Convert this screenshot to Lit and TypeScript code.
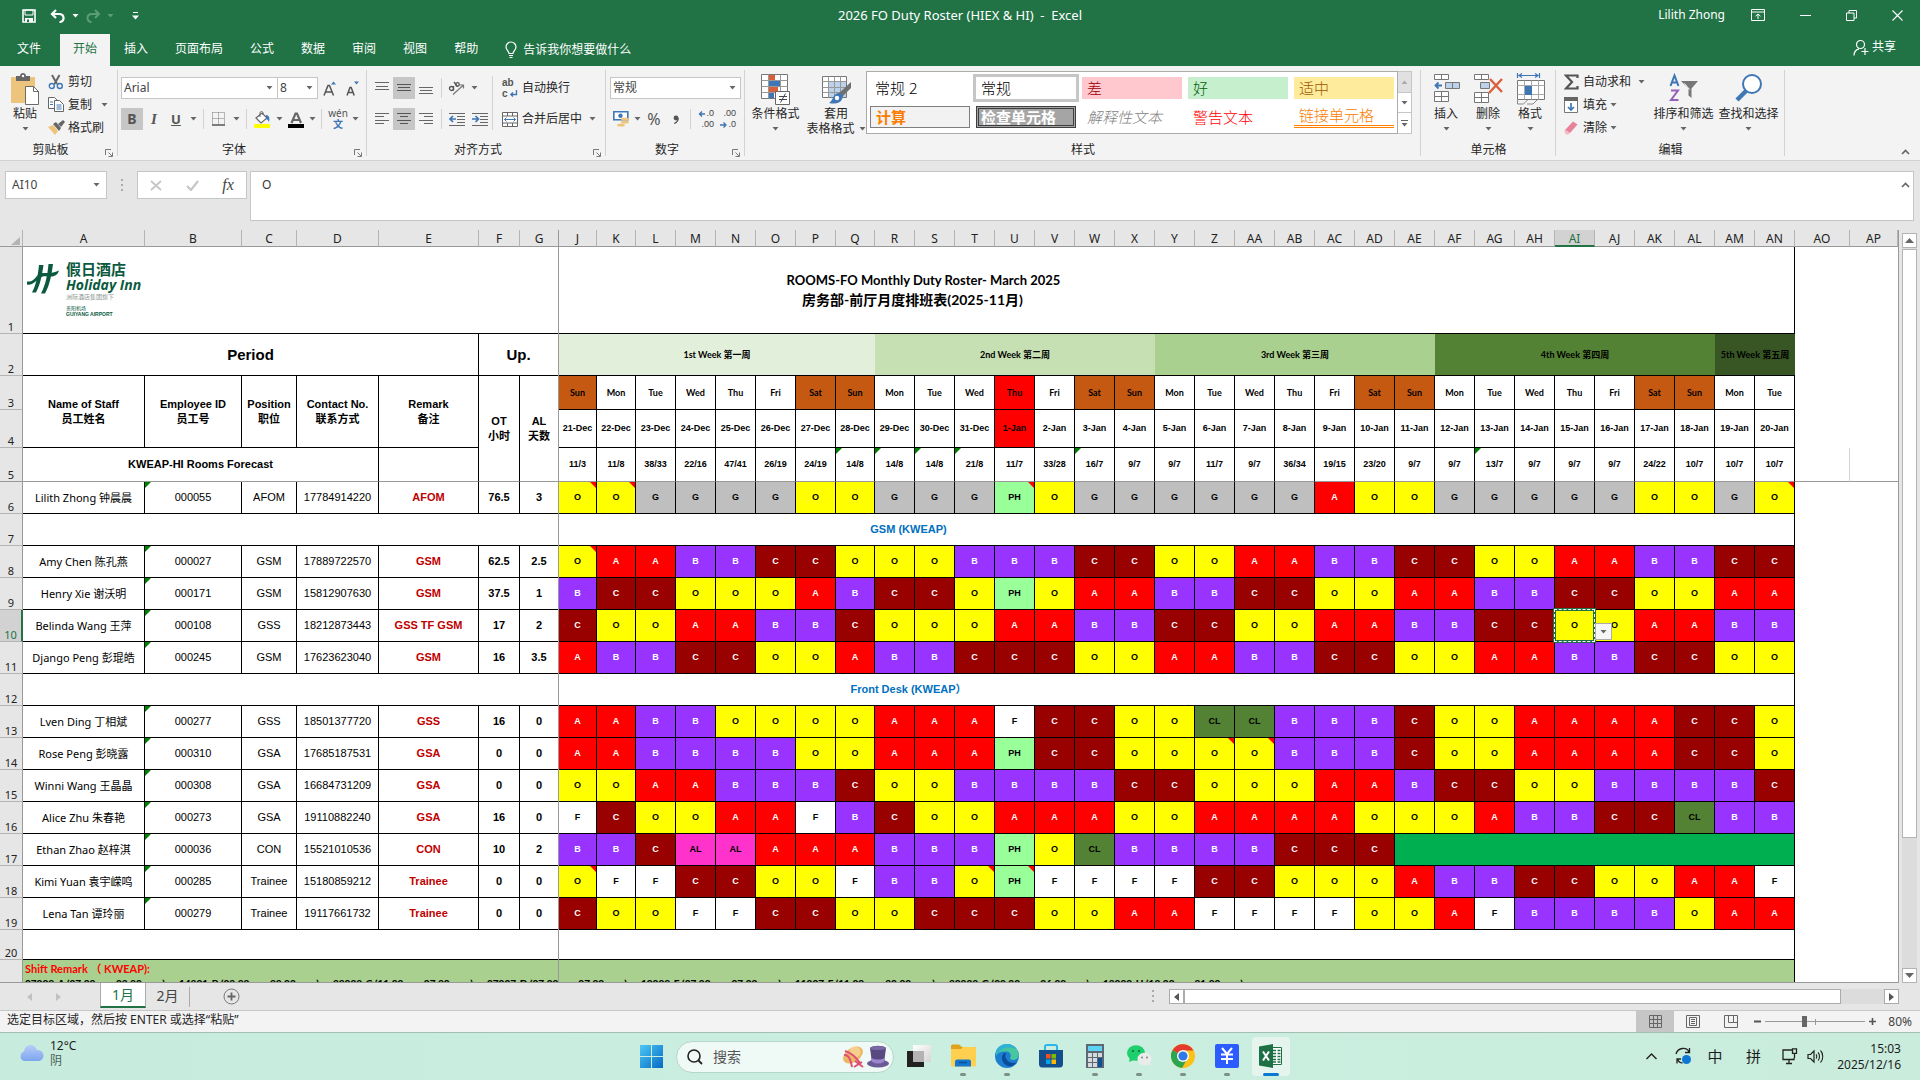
import { LitElement, html, css, svg, nothing } from "lit";
import { customElement } from "lit/decorators.js";
import { classMap } from "lit/directives/class-map.js";

const base = css`
  * { box-sizing: border-box; }
  :host {
    display: block;
    font-family: "Noto Sans", "Noto Sans CJK SC", sans-serif;
    font-size: 12px;
    line-height: 16px;
    color: #262626;
  }
  button, input, select, textarea {
    font: inherit; color: inherit; background: none; border: 0; margin: 0; padding: 0; border-radius: 0;
  }
  button { display: flex; align-items: center; justify-content: center; white-space: nowrap; }
  svg { display: block; flex: none; }
`;

const icon = (w: number, h: number, body: unknown) =>
  html`<svg width=${w} height=${h} viewBox="0 0 ${w} ${h}" fill="none" aria-hidden="true">${body}</svg>`;
const caret = (color = "#666") => icon(7, 4, svg`<path d="M0.5 0h6L3.5 3.6z" fill=${color}/>`);

const icons = {
  save: icon(14, 14, svg`<path d="M1 1h12v12H1z" stroke="#fff" stroke-width="1.6"/><path d="M3 1h8v5H3z" stroke="#fff"/><path d="M3 9h8v4H3z" fill="#fff"/><path d="M5 10.500h2V13H5z" fill="#217346"/>`),
  undo: icon(16, 14, svg`<path d="M6 1L2 5l4 4M2.500 5H9c6 0 6 8 .5 8" stroke="#fff" stroke-width="2.200"/>`),
  redo: icon(16, 14, svg`<path d="M10 1l4 4-4 4M13.500 5H7c-6 0-6 8-.5 8" stroke="#5c9c78" stroke-width="2"/>`),
  customize: icon(7, 8, svg`<path d="M1 .5h5" stroke="#fff"/><path d="M0 3.500h7L3.500 7.500z" fill="#fff"/>`),
  bulb: icon(14, 18, svg`<path d="M5 12.500C5 10 2 9 2 6a5 5 0 0 1 10 0c0 3-3 4-3 6.500zM5 14.500h4M5.500 16.500h3" stroke="#fff" stroke-width="1.200"/>`),
  ribbonOpt: icon(14, 12, svg`<path d="M.5 .5h13v11H.5zM.5 3h13M7 10V5M4.500 7.200L7 5l2.500 2.200" stroke="#fff"/>`),
  min: icon(11, 11, svg`<path d="M0 5.500h11" stroke="#fff"/>`),
  restore: icon(11, 11, svg`<path d="M.5 3h7.500v7.500H.5zM3 3V.5h7.500V8H8" stroke="#fff"/>`),
  close: icon(11, 11, svg`<path d="M.5 .5l10 10M10.500 .5l-10 10" stroke="#fff" stroke-width="1.100"/>`),
  person: icon(16, 17, svg`<circle cx="7.500" cy="5.500" r="4" stroke="#fff" stroke-width="1.200"/><path d="M1 16.500c0-4 2.500-6 5-6.700M12 9v7M8.500 12.500h7" stroke="#fff" stroke-width="1.200"/>`),
  paste: icon(30, 32, svg`<path d="M1 4h24v26H1z" fill="#edc47c"/><path d="M6 3h4c0-4 6-4 6 0h4v5H6z" fill="#666"/><circle cx="13" cy="3" r="1.200" fill="#fff"/><path d="M15.500 13.500h8l5 5v13h-13z" fill="#fff" stroke="#6b6b6b"/><path d="M23.500 13.500v5h5" stroke="#6b6b6b"/>`),
  cut: icon(16, 16, svg`<path d="M4 1l5 9M11.500 1l-5 9" stroke="#666" stroke-width="2"/><circle cx="3.800" cy="12" r="2.500" stroke="#3f76b5" stroke-width="1.400"/><circle cx="11.800" cy="12" r="2.500" stroke="#3f76b5" stroke-width="1.400"/>`),
  copy: icon(16, 15, svg`<path d="M.5 .5h6l3 3v8h-9z" fill="#fff" stroke="#666"/><path d="M2 5h3M2 7.500h3" stroke="#3f76b5"/><path d="M6.500 3.500h5l4 4v7h-9z" fill="#fff" stroke="#666"/><path d="M8.500 8h5M8.500 10h5M8.500 12h5" stroke="#3f76b5"/>`),
  painter: icon(17, 15, svg`<path d="M0 7l5-2 5 6-3 4z" fill="#edc47c"/><path d="M5 4l3-2 5 6-2 3z" fill="#666"/><path d="M10 4l5-4 2 2-4 5z" fill="#666"/>`),
  growA: icon(14, 17, svg`<path d="M1 15.500L5 5.500h1.500l4 10M2.800 12h6" stroke="#555" stroke-width="1.500"/><path d="M8 4.500L10.500 1.500 13 4.500z" fill="#3f76b5"/>`),
  shrinkA: icon(14, 17, svg`<path d="M1 15.500l3-8h1.200l3 8M2.500 12.500h4.500" stroke="#555" stroke-width="1.500"/><path d="M8 1.500h5L10.500 4.500z" fill="#3f76b5"/>`),
  borders: icon(14, 14, svg`<path d="M.5 .5v12M6.500 .5v12M12.500 .5v12M.5 .5h12M.5 6.500h12" stroke="#777" stroke-dasharray="1 1"/><path d="M0 13h13" stroke="#555" stroke-width="1.500"/>`),
  fill: icon(17, 17, svg`<path d="M2 7l6-5 5 5-6 5z" stroke="#666" fill="#fff" stroke-width="1.200"/><path d="M6 6V2c0-2 3-2 3 0v2" stroke="#666"/><path d="M12 4c3 0 4 3 3 7-1-2-2-3-3-3z" fill="#3f76b5"/><path d="M0 13h16v4H0z" fill="#ff0"/>`),
  fontColor: icon(17, 17, svg`<path d="M3.500 12L7.500 2.500h1.500L13 12M5 9h7" stroke="#666" stroke-width="2.200"/><path d="M0 13h16v4H0z" fill="#000"/>`),
  top: icon(14, 14, svg`<path d="M0 1.500h14M1 5.500h12M0 8.500h14" stroke="#666"/>`),
  middle: icon(14, 14, svg`<path d="M0 3.500h14M1 6.500h12M0 9.500h14" stroke="#555"/>`),
  bottom: icon(14, 14, svg`<path d="M0 6.500h14M1 9.500h12M0 12.500h14" stroke="#666"/>`),
  left: icon(14, 14, svg`<path d="M0 1.500h14M0 4.500h9M0 8.500h14M0 11.500h9" stroke="#666"/>`),
  center: icon(14, 14, svg`<path d="M0 1.500h14M3 4.500h8M0 8.500h14M3 11.500h8" stroke="#555"/>`),
  right: icon(14, 14, svg`<path d="M0 1.500h14M5 4.500h9M0 8.500h14M5 11.500h9" stroke="#666"/>`),
  orient: icon(18, 16, svg`<circle cx="3.500" cy="8.500" r="2" stroke="#555" stroke-width="1.300"/><path d="M5.500 6v4.500M6 2l3.500 4.500" stroke="#555" stroke-width="1.300"/><circle cx="9.500" cy="4.500" r="1.800" stroke="#555" stroke-width="1.300"/><path d="M5 14.500L15.500 5M12 5h3.500v3.500" stroke="#777" stroke-width="1.200"/>`),
  outdent: icon(16, 14, svg`<path d="M0 1.500h16M8 4.500h8M8 7.500h8M8 10.500h8M0 13.500h16" stroke="#666"/><path d="M7 7H1M4 4L1 7l3 3" stroke="#3f76b5" stroke-width="1.700"/>`),
  indent: icon(16, 14, svg`<path d="M0 1.500h16M8 4.500h8M8 7.500h8M8 10.500h8M0 13.500h16" stroke="#666"/><path d="M0 7h6M3.500 4l3 3-3 3" stroke="#3f76b5" stroke-width="1.700"/>`),
  wrap: icon(9, 8, svg`<path d="M7.500 0v4.500H2M4 2.500l-2.200 2 2.200 2" stroke="#3f76b5" stroke-width="1.300"/>`),
  merge: icon(16, 15, svg`<path d="M.5 .5h15v14H.5zM.5 4h15M.5 11h15M5.500 .5V4M10.500 .5V4M5.500 11v3.500M10.500 11v3.500" stroke="#666" fill="#fff"/><path d="M2.500 7.500h11M4.500 5.500l-2 2 2 2M11.500 5.500l2 2-2 2" stroke="#3f76b5"/>`),
  currency: icon(17, 16, svg`<path d="M.8 .8h14v8H.8z" fill="#fff" stroke="#3f76b5" stroke-width="1.600"/><circle cx="7.500" cy="4.800" r="2.200" fill="#3f76b5"/><ellipse cx="12" cy="8" rx="4" ry="1.600" fill="#edc47c"/><ellipse cx="12" cy="11" rx="4" ry="1.600" fill="#edc47c"/><ellipse cx="8" cy="14" rx="4" ry="1.600" fill="#edc47c"/>`),
  comma: icon(6, 9, svg`<circle cx="3" cy="3" r="2.400" fill="#555"/><path d="M5.200 3c0 3-1.500 4.500-4 5.500" stroke="#555" stroke-width="1.300"/>`),
  decUp: icon(8, 6, svg`<path d="M7 3H1.500M4 .5L1.500 3 4 5.500" stroke="#3f76b5" stroke-width="1.400"/>`),
  decDn: icon(8, 6, svg`<path d="M0 3h6M3.500 .5L6 3 3.500 5.500" stroke="#3f76b5" stroke-width="1.400"/>`),
  cond: icon(31, 32, svg`<path d="M1.500 1.500h26v24h-26z" fill="#fff" stroke="#777"/><path d="M9 2h6v6H9z" fill="#d9603b"/><path d="M9 8h11v5H9z" fill="#3f76b5"/><path d="M9 14h9v5H9z" fill="#d9603b"/><path d="M9 20h5v5H9z" fill="#3f76b5"/><path d="M1.500 7.500h26M1.500 13.500h26M1.500 19.500h26M8.500 1.500v24M20.500 1.500v24" stroke="#999"/><path d="M15.500 18.500h14v13h-14z" fill="#fff" stroke="#666"/><path d="M19 23.500h8M19 26.500h8M25.500 20.500l-5 9" stroke="#444"/>`),
  tableFmt: icon(31, 32, svg`<path d="M1.500 3.500h24v21h-24z" fill="#fff" stroke="#777"/><path d="M8 9h17v15H8z" fill="#bcd2ea"/><path d="M1.500 8.500h24M1.500 14.500h24M1.500 19.500h24M7.500 3.500v21M13.500 3.500v21M19.500 3.500v21" stroke="#999"/><path d="M30 9v6l-9 9-4-3z" fill="#707070"/><path d="M17 20c4 0 6 3 4 6-2 5-8 5-13 4 4-2 4-9 9-10z" fill="#3f76b5"/><circle cx="16" cy="25" r="2.200" fill="#fff"/>`),
  insert: icon(27, 30, svg`<path d="M1.500 1.500h14v5h-14zM8.500 1.500v5M1.500 18.500h14v10h-14zM8.500 18.500v10M1.500 23.500h14" stroke="#777" fill="#fff"/><path d="M12.500 9.500h14v6h-14z" fill="#bcd2ea" stroke="#777"/><path d="M19.500 9.500v6" stroke="#777"/><path d="M9 12.500H2.500M5.500 9.500l-3 3 3 3" stroke="#3f76b5" stroke-width="1.800"/>`),
  remove: icon(30, 30, svg`<path d="M1.500 1.500h14v5h-14zM8.500 1.500v5M1.500 19.500h14v10h-14zM8.500 19.500v10M1.500 24.500h14" stroke="#777" fill="#fff"/><path d="M7.500 9.500h9v6h-9z" fill="#bcd2ea" stroke="#777"/><path d="M17 6l12 13M29 6L16 20" stroke="#d9603b" stroke-width="2.400"/>`),
  format: icon(29, 32, svg`<path d="M1.500 0v5M23.500 0v5M3 2.500h19M6 .5l-3 2 3 2M19 .5l3 2-3 2" stroke="#3f76b5" stroke-width="1.200"/><path d="M1.500 7.500h27v19h-27z" fill="#fff" stroke="#777"/><path d="M1.500 12.500h27M1.500 21.500h27M8.500 7.500v19M15.500 7.500v19M22.500 7.500v19" stroke="#aaa"/><path d="M9 13h7v9H9z" fill="#3f76b5"/><path d="M1.500 27v4h6l4-4M11 31h6l4-4" stroke="#888"/>`),
  sigma: icon(15, 16, svg`<path d="M13.500 4V1.500H2L8 8l-6 6.500h11.500V12" stroke="#555" stroke-width="2.200"/>`),
  fillDown: icon(14, 16, svg`<path d="M.5 .5h13v15H.5z" fill="#fff" stroke="#777"/><path d="M0 0h14v4H0z" fill="#666"/><path d="M7 6v7M4 10l3 3 3-3" stroke="#3f76b5" stroke-width="1.700"/>`),
  eraser: icon(14, 14, svg`<path d="M1 9l8-8.500 4.500 3L6 12z" fill="#e8829b"/><path d="M0 10l1-1 5 3-1.500 1.500H2z" fill="#f3b9c6"/>`),
  sort: icon(30, 30, svg`<path d="M1.500 13L5.500 2.500l4 10.500M3 9.500h5.500" stroke="#3f76b5" stroke-width="2"/><path d="M2 17.500h7L2 27h7.500" stroke="#9561b8" stroke-width="2"/><path d="M12 8h17l-6.500 7.500V25l-3-2.500v-7z" fill="#777"/><path d="M20.500 16.500l-5-6" stroke="#fff"/>`),
  find: icon(29, 30, svg`<circle cx="18" cy="11" r="9" stroke="#3f76b5" stroke-width="2" fill="#fff"/><path d="M12 18L3 27" stroke="#3f76b5" stroke-width="4.500"/>`),
  launcher: icon(8, 8, svg`<path d="M.5 6V.5H6M3.500 3.500l3.500 3.500M7.500 3.500v4h-4" stroke="#777"/>`),
  collapse: icon(9, 6, svg`<path d="M1 5l3.500-3.500L8 5" stroke="#666" stroke-width="1.700"/>`),
};

@customElement("excel-ribbon")
class ExcelRibbon extends LitElement {
  static styles = [base, css`
    .green { background: #217346; color: #fff; }
    .title { display: grid; grid-template-columns: 1fr auto 1fr; align-items: center; height: 30px; }
    .quick { display: flex; align-items: center; padding-left: 22px; gap: 6px; padding-top: 2px; }
    .quick .gap { margin-left: 2px; }
    .quick .last { margin-left: 6px; }
    .name { white-space: pre; font-size: 13px; }
    .win { display: flex; align-items: center; justify-content: flex-end; padding-right: 17px; gap: 35px; }
    .win .user { margin-right: -9px; }
    .tabs { display: flex; align-items: flex-end; height: 36px; padding-left: 4px; }
    .tabs button { height: 32px; padding: 0 13px 2px; margin-right: 1px; }
    .tabs button.file { margin-right: 6px; }
    .tabs button.on { background: #f3f3f3; color: #217346; }
    .tabs button.tell { gap: 5px; padding: 0 12px; }
    .tabs button.share { margin-left: auto; padding: 0 23px 6px 0; gap: 3px; }
    .ribbon { display: flex; height: 95px; background: #f3f3f3; border-bottom: 1px solid #d2d2d2; }
    .group { display: flex; flex-direction: column; position: relative; flex: none; }
    .group::after { content: ""; position: absolute; right: 0; top: 4px; bottom: 4px; width: 1px; background: #d2d2d2; }
    .clip { width: 118px; } .font { width: 249px; } .align { width: 239px; } .num { width: 139px; }
    .styles { width: 676px; } .cells { width: 135px; } .edit { width: 229px; }
    .body { display: flex; height: 76px; }
    .cells .body { padding-left: 4px; }
    .foot { display: flex; height: 16px; align-items: center; }
    .foot span { flex: 1; text-align: center; }
    .foot button { width: 17px; height: 16px; padding: 5px 1px 0 0; }
    .stack { display: flex; flex-direction: column; padding-top: 4px; }
    .edit .stack { padding-left: 7px; }
    .stack > div { display: flex; align-items: center; height: 23px; }
    .stack button { gap: 4px; }
    .stack .ico { width: 16px; display: flex; justify-content: center; }
    .rows { display: flex; flex-direction: column; gap: 9px; padding: 11px 0 0 4px; }
    .font .rows { padding-left: 3px; }
    .rows > div { display: flex; align-items: center; height: 22px; }
    .w10 { width: 10px; height: 22px; } .w12 { width: 12px; height: 22px; } .w20 { width: 20px; height: 22px; }
    .w22 { width: 22px; height: 22px; } .w24 { width: 24px; height: 22px; }
    .on2 { background: #c6c6c6; }
    .sep { width: 1px; height: 20px; margin: 0 4px; background: #d2d2d2; }
    .tall { width: 1px; height: 54px; margin: 10px 5px 0 0; background: #d2d2d2; }
    .combo { display: flex; align-items: center; height: 22px; background: #fff; border: 1px solid #c6c6c6; padding-right: 4px; }
    .combo select { appearance: none; flex: 1; min-width: 0; padding-left: 2px; height: 20px; color: #444; }
    .c-font { width: 157px; } .c-size { width: 41px; margin-left: -1px; } .c-num { width: 131px; }
    .bold { font-weight: 700; font-size: 14px; color: #555; }
    .ital { font: italic 700 15px "Liberation Serif", serif; color: #555; }
    .under { font-weight: 700; font-size: 13px; color: #555; text-decoration: underline; }
    .wen { flex-direction: column; font-size: 10px; line-height: 11px; color: #555; }
    .wen b { color: #3f76b5; font-weight: 700; }
    .wraps { flex-direction: column; align-items: flex-start; font: 700 10px/11px "Liberation Sans", sans-serif; color: #555; }
    .wraps span { display: flex; align-items: center; gap: 1px; height: 11px; }
    .act { gap: 4px; height: 22px; }
    .act .ico { width: 16px; display: flex; justify-content: center; }
    .pct { font-size: 16px; color: #555; }
    .dec { flex-direction: column; align-items: flex-end; font: 400 9px/11px "Liberation Sans", sans-serif; color: #444; padding-right: 3px; }
    .dec span { display: flex; align-items: center; height: 11px; }
    .big { flex-direction: column; justify-content: flex-start; padding-top: 7px; line-height: 15px; }
    .big svg { margin-bottom: 1px; }
    .big .pic { height: 33px; }
    .big .arr { height: 15px; display: flex; align-items: center; }
    .big .arr svg { margin: 0 0 0 4px; }
    .big .arr.only svg { margin: 0; }
    .b-paste { width: 48px; padding-left: 2px; } .b-cond { width: 61px; } .b-table { width: 60px; }
    .b-cell { width: 42px; } .b-edit { width: 65px; }
    .gallery { display: grid; grid-template-columns: repeat(5, 100px); gap: 6px; padding: 5px 3px 5px 3px; height: 63px; margin-top: 5px;
      background: #fff; border: 1px solid #ababab; }
    .gallery button { justify-content: flex-start; padding-left: 5px; height: 22px; font-size: 15px; font-weight: 300; color: #000; }
    .gallery .sel { outline: 3px solid #c6c6c6; }
    .gallery .bad { background: #ffc7ce; color: #9c0006; }
    .gallery .good { background: #c6efce; color: #006100; }
    .gallery .mid { background: #ffeb9c; color: #9c5700; }
    .gallery .calc { border: 1px solid #7f7f7f; background: #f2f2f2; color: #fa7d00; font-weight: 700; }
    .gallery .check { border: 3px double #3f3f3f; background: #a5a5a5; color: #fff; font-weight: 700; padding-left: 2px; }
    .gallery .note { color: #7f7f7f; font-style: italic; }
    .gallery .warn { color: #f00; }
    .gallery .link { color: #fa7d00; border-bottom: 3px double #ff8001; }
    .gscroll { display: flex; flex-direction: column; width: 14px; height: 63px; margin-top: 5px; }
    .gscroll button { flex: 1; border: 1px solid #c6c6c6; border-left: 0; margin-bottom: -1px; background: #fff; flex-direction: column; gap: 2px; }
    .gscroll button:first-child { background: #e1e1e1; }
    .gscroll button:last-child { margin-bottom: 0; }
    .fold { margin-left: auto; width: 30px; padding-top: 80px; height: 92px; }
    .fx { display: flex; align-items: flex-start; gap: 3px; height: 69px; padding: 10px 6px 0 5px; background: #e6e6e6; }
    .namebox { display: flex; align-items: center; width: 102px; height: 28px; background: #fff; border: 1px solid #c6c6c6; padding: 0 6px; }
    .namebox input { flex: 1; min-width: 0; color: #444; }
    .dots { width: 24px; height: 28px; display: flex; align-items: center; justify-content: center; }
    .fxb { display: flex; width: 110px; height: 28px; background: #fff; border: 1px solid #c6c6c6; }
    .fxb button { flex: 1; }
    .fxb .fn { font: italic 400 16px "Liberation Serif", serif; color: #444; }
    .formula { flex: 1; display: flex; align-items: flex-start; height: 50px; background: #fff; border: 1px solid #c6c6c6; }
    .formula textarea { flex: 1; resize: none; outline: 0; height: 46px; padding: 5px 11px; color: #333; overflow: hidden; }
    .formula button { width: 15px; height: 26px; }
  `];

  private foot(label: string, launcher = true) {
    return html`<div class="foot"><span>${label}</span>${launcher ? html`<button aria-label="${label}设置">${icons.launcher}</button>` : nothing}</div>`;
  }
  private tool(cls: string, label: string, body: unknown) {
    return html`<button class=${cls} aria-label=${label}>${body}</button>`;
  }
  private drop(label: string, cls = "w12") {
    return html`<button class=${cls} aria-label="${label}选项">${caret()}</button>`;
  }
  private big(cls: string, pic: unknown, label: string) {
    return html`<button class="big ${cls}"><span class="pic">${pic}</span><span>${label}</span><span class="arr only">${caret()}</span></button>`;
  }

  render() {
    return html`
      <header class="green">
        <div class="title">
          <div class="quick">
            ${this.tool("", "保存", icons.save)}
            <span class="gap"></span>${this.tool("", "撤消", icons.undo)}${this.tool("", "撤消列表", caret("#fff"))}
            ${this.tool("", "恢复", icons.redo)}${this.tool("", "恢复列表", caret("#5c9c78"))}
            <span class="last"></span>${this.tool("", "自定义快速访问工具栏", icons.customize)}
          </div>
          <div class="name">2026 FO Duty Roster (HIEX &amp; HI)  -  Excel</div>
          <div class="win">
            <span class="user">Lilith Zhong</span>
            ${this.tool("", "功能区显示选项", icons.ribbonOpt)}${this.tool("", "最小化", icons.min)}
            ${this.tool("", "还原", icons.restore)}${this.tool("", "关闭", icons.close)}
          </div>
        </div>
        <nav class="tabs">
          <button class="file">文件</button><button class="on">开始</button>
          ${["插入", "页面布局", "公式", "数据", "审阅", "视图", "帮助"].map((t) => html`<button>${t}</button>`)}
          <button class="tell">${icons.bulb}告诉我你想要做什么</button>
          <button class="share">${icons.person}共享</button>
        </nav>
      </header>
      <section class="ribbon">
        <div class="group clip">
          <div class="body">
            ${this.big("b-paste", icons.paste, "粘贴")}
            <div class="stack">
              <div><button><span class="ico">${icons.cut}</span>剪切</button></div>
              <div><button><span class="ico">${icons.copy}</span>复制</button>${this.drop("复制", "w24")}</div>
              <div><button><span class="ico">${icons.painter}</span>格式刷</button></div>
            </div>
          </div>
          ${this.foot("剪贴板")}
        </div>
        <div class="group font">
          <div class="body"><div class="rows">
            <div>
              <label class="combo c-font"><select aria-label="字体"><option>Arial</option></select>${caret()}</label>
              <label class="combo c-size"><select aria-label="字号"><option>8</option></select>${caret()}</label>
              ${this.tool("w24", "增大字号", icons.growA)}${this.tool("w22", "减小字号", icons.shrinkA)}
            </div>
            <div>
              ${this.tool("w22 on2 bold", "加粗", "B")}${this.tool("w22 ital", "倾斜", "I")}${this.tool("w22 under", "下划线", "U")}${this.drop("下划线")}
              <i class="sep"></i>${this.tool("w22", "边框", icons.borders)}${this.drop("边框")}
              <i class="sep"></i>${this.tool("w22", "填充颜色", icons.fill)}${this.drop("填充颜色")}
              ${this.tool("w22", "字体颜色", icons.fontColor)}${this.drop("字体颜色", "w10")}
              <i class="sep"></i>${this.tool("w24 wen", "拼音", html`wén<b>文</b>`)}${this.drop("拼音", "w10")}
            </div>
          </div></div>
          ${this.foot("字体")}
        </div>
        <div class="group align">
          <div class="body">
            <div class="rows">
              <div>
                ${this.tool("w22", "顶端对齐", icons.top)}${this.tool("w22 on2", "垂直居中", icons.middle)}${this.tool("w22", "底端对齐", icons.bottom)}
                <i class="sep"></i>${this.tool("w22", "方向", icons.orient)}${this.drop("方向")}
              </div>
              <div>
                ${this.tool("w22", "左对齐", icons.left)}${this.tool("w22 on2", "居中", icons.center)}${this.tool("w22", "右对齐", icons.right)}
                <i class="sep"></i>${this.tool("w22", "减少缩进量", icons.outdent)}${this.tool("w24", "增加缩进量", icons.indent)}
              </div>
            </div>
            <i class="tall"></i>
            <div class="rows">
              <div><button class="act"><span class="ico wraps"><span>ab</span><span>c${icons.wrap}</span></span>自动换行</button></div>
              <div><button class="act"><span class="ico">${icons.merge}</span>合并后居中</button>${this.drop("合并", "w20")}</div>
            </div>
          </div>
          ${this.foot("对齐方式")}
        </div>
        <div class="group num">
          <div class="body"><div class="rows">
            <div><label class="combo c-num"><select aria-label="数字格式"><option>常规</option></select>${caret()}</label></div>
            <div>
              ${this.tool("w22", "会计数字格式", icons.currency)}${this.drop("会计数字格式", "w10")}
              ${this.tool("w24 pct", "百分比样式", "%")}${this.tool("w20", "千位分隔样式", icons.comma)}
              <i class="sep"></i>
              ${this.tool("w22 dec", "增加小数位数", html`<span>${icons.decUp}.0</span><span>.00</span>`)}
              ${this.tool("w22 dec", "减少小数位数", html`<span>.00</span><span>${icons.decDn}.0</span>`)}
            </div>
          </div></div>
          ${this.foot("数字")}
        </div>
        <div class="group styles">
          <div class="body">
            ${this.big("b-cond", icons.cond, "条件格式")}
            <button class="big b-table"><span class="pic">${icons.tableFmt}</span><span>套用</span><span class="arr">表格格式${caret()}</span></button>
            <div class="gallery">
              <button>常规 2</button><button class="sel">常规</button><button class="bad">差</button><button class="good">好</button><button class="mid">适中</button>
              <button class="calc">计算</button><button class="check">检查单元格</button><button class="note">解释性文本</button><button class="warn">警告文本</button><button class="link">链接单元格</button>
            </div>
            <div class="gscroll">
              <button aria-label="上一行">${icon(7, 4, svg`<path d="M.5 4h6L3.500 .4z" fill="#aaa"/>`)}</button>
              <button aria-label="下一行">${caret()}</button>
              <button aria-label="其他样式">${icon(7, 7, svg`<path d="M0 .5h7" stroke="#666"/><path d="M.5 3h6L3.500 6.600z" fill="#666"/>`)}</button>
            </div>
          </div>
          ${this.foot("样式", false)}
        </div>
        <div class="group cells">
          <div class="body">
            ${this.big("b-cell", icons.insert, "插入")}${this.big("b-cell", icons.remove, "删除")}${this.big("b-cell", icons.format, "格式")}
          </div>
          ${this.foot("单元格", false)}
        </div>
        <div class="group edit">
          <div class="body">
            <div class="stack">
              <div><button><span class="ico">${icons.sigma}</span>自动求和</button>${this.drop("自动求和", "w20")}</div>
              <div><button><span class="ico">${icons.fillDown}</span>填充</button>${this.drop("填充")}</div>
              <div><button><span class="ico">${icons.eraser}</span>清除</button>${this.drop("清除")}</div>
            </div>
            ${this.big("b-edit", icons.sort, "排序和筛选")}${this.big("b-edit", icons.find, "查找和选择")}
          </div>
          ${this.foot("编辑", false)}
        </div>
        <button class="fold" aria-label="折叠功能区">${icons.collapse}</button>
      </section>
      <section class="fx">
        <div class="namebox"><input aria-label="名称框" value="AI10" />${caret()}</div>
        <div class="dots">${icon(2, 12, svg`<path d="M0 0h2v2H0zM0 5h2v2H0zM0 10h2v2H0z" fill="#aaa"/>`)}</div>
        <div class="fxb">
          <button aria-label="取消">${icon(12, 11, svg`<path d="M1 1l10 9M11 1L1 10" stroke="#c6c6c6" stroke-width="1.800"/>`)}</button>
          <button aria-label="输入">${icon(13, 11, svg`<path d="M1 6l4 4 7-9" stroke="#c6c6c6" stroke-width="2.200"/>`)}</button>
          <button class="fn" aria-label="插入函数">fx</button>
        </div>
        <div class="formula">
          <textarea aria-label="编辑栏">O</textarea>
          <button aria-label="折叠编辑栏">${icons.collapse}</button>
        </div>
      </section>
    `;
  }
}

const LEFT = [["A", 122], ["B", 97], ["C", 55], ["D", 82], ["E", 100], ["F", 41], ["G", 39]] as const;
const DAY_COLS = "J K L M N O P Q R S T U V W X Y Z AA AB AC AD AE AF AG AH AI AJ AK AL AM AN".split(" ");
const dayWidth = (i: number) => (i === 0 ? 38 : i === 1 || i === 7 ? 39 : 40);
const DAYS = DAY_COLS.map((_, i) => ["Sun", "Mon", "Tue", "Wed", "Thu", "Fri", "Sat"][i % 7]);
const DATES = DAY_COLS.map((_, i) => (i < 11 ? `${21 + i}-Dec` : `${i - 10}-Jan`));
const HOLIDAY = 11;
const FORECAST = "11/3 11/8 38/33 22/16 47/41 26/19 24/19 14/8 14/8 14/8 21/8 11/7 33/28 16/7 9/7 9/7 11/7 9/7 36/34 19/15 23/20 9/7 9/7 13/7 9/7 9/7 9/7 24/22 10/7 10/7 10/7".split(" ");
const FORECAST_FLAGS = [7, 8, 9, 10, 13, 23];
const WEEKS = [["1st Week 第一周", 8, "wk1"], ["2nd Week 第二周", 7, "wk2"], ["3rd Week 第三周", 7, "wk3"], ["4th Week 第四周", 7, "wk4"], ["5th Week 第五周", 2, "wk5"]] as const;

interface Staff { row: number; name: string; id: string; pos: string; tel: string; remark: string; ot: string; al: string; shifts: string; notes?: number[]; }
const GROUPS: { row?: number; title?: string; staff: Staff[] }[] = [
  { staff: [
    { row: 6, name: "Lilith Zhong 钟晨晨", id: "000055", pos: "AFOM", tel: "17784914220", remark: "AFOM", ot: "76.5", al: "3", shifts: "O O G G G G O O G G G PH O G G G G G G A O O G G G G G O O G O", notes: [0, 1, 11, 30] },
  ] },
  { row: 7, title: "GSM (KWEAP)", staff: [
    { row: 8, name: "Amy Chen 陈孔燕", id: "000027", pos: "GSM", tel: "17889722570", remark: "GSM", ot: "62.5", al: "2.5", shifts: "O A A B B C C O O O B B B C C O O A A B B C C O O A A B B C C", notes: [0] },
    { row: 9, name: "Henry Xie 谢沃明", id: "000171", pos: "GSM", tel: "15812907630", remark: "GSM", ot: "37.5", al: "1", shifts: "B C C O O O A B C C O PH O A A B B C C O O A A B B C C O O A A" },
    { row: 10, name: "Belinda Wang 王萍", id: "000108", pos: "GSS", tel: "18212873443", remark: "GSS TF GSM", ot: "17", al: "2", shifts: "C O O A A B B C O O O A A B B C C O O A A B B C C O O A A B B" },
    { row: 11, name: "Django Peng 彭琨皓", id: "000245", pos: "GSM", tel: "17623623040", remark: "GSM", ot: "16", al: "3.5", shifts: "A B B C C O O A B B C C C O O A A B B C C O O A A B B C C O O" },
  ] },
  { row: 12, title: "Front Desk (KWEAP）", staff: [
    { row: 13, name: "Lven Ding 丁相斌", id: "000277", pos: "GSS", tel: "18501377720", remark: "GSS", ot: "16", al: "0", shifts: "A A B B O O O O A A A F C C O O CL CL B B B C O O A A A A C C O" },
    { row: 14, name: "Rose Peng 彭晓露", id: "000310", pos: "GSA", tel: "17685187531", remark: "GSA", ot: "0", al: "0", shifts: "A A B B B B O O A A A PH C C O O O O B B B C O O A A A A C C O", notes: [16, 17] },
    { row: 15, name: "Winni Wang 王晶晶", id: "000308", pos: "GSA", tel: "16684731209", remark: "GSA", ot: "0", al: "0", shifts: "O O A A B B B C O O B B B B C C O O O A A B C C O O B B B B C" },
    { row: 16, name: "Alice Zhu 朱春艳", id: "000273", pos: "GSA", tel: "19110882240", remark: "GSA", ot: "16", al: "0", shifts: "F C O O A A F B C O O A A A O O A A A A O O O A B B C C CL B B" },
    { row: 17, name: "Ethan Zhao 赵梓淇", id: "000036", pos: "CON", tel: "15521010536", remark: "CON", ot: "10", al: "2", shifts: "B B C AL AL A A A B B B PH O CL B B B B C C C" },
    { row: 18, name: "Kimi Yuan 袁宇嵘鸣", id: "000285", pos: "Trainee", tel: "15180859212", remark: "Trainee", ot: "0", al: "0", shifts: "O F F C C O O F B B O PH F F F F C C O O O A B B C C O O A A F", notes: [0, 10, 11] },
    { row: 19, name: "Lena Tan 谭玲丽", id: "000279", pos: "Trainee", tel: "19117661732", remark: "Trainee", ot: "0", al: "0", shifts: "C O O F F C C O O C C C O O A A F F F F O O A F B B B B O A A" },
  ] },
];
const REMARKS = [["07003-A (07:00", "03:30"], ["14301-B (02:30", "23:00"], ["22003-C (11:00", "07:30"], ["07007-D (07:00", "07:00"], ["10003-E (07:00", "07:00"], ["11007-F (11:00", "20:00"], ["20003-G (00:00", "06:00"], ["12000-H (12:00", "21:00"]];

@customElement("duty-grid")
class DutyGrid extends LitElement {
  static styles = [base, css`
    :host { display: flex; min-height: 0; background: #e6e6e6; }
    .sheet { flex: 1; min-width: 0; position: relative; overflow: hidden; background: #fff; border-right: 1px solid #999; border-bottom: 1px solid #999; }
    table { table-layout: fixed; width: 100%; border-spacing: 0; font: 700 11px/15px "Liberation Sans", "Noto Sans CJK SC", sans-serif; color: #000; }
    td, th { position: relative; padding: 0; text-align: center; white-space: nowrap; overflow: hidden; border: solid #000; border-width: 0 1px 1px 0; }
    th { font: 400 12px/14px "Noto Sans", sans-serif; color: #222; background: #e6e6e6; border-color: #b4b4b4; }
    thead th { height: 17px; padding-top: 2px; border-bottom-color: #999; }
    thead th.cur { background: #d2d2d2; color: #217346; border-bottom: 2px solid #217346; line-height: 13px; }
    tbody th { vertical-align: bottom; border-right-color: #999; font-size: 11px; line-height: 13px; }
    tbody th.cur { background: #d2d2d2; color: #217346; border-right: 2px solid #217346; }
    .corner svg { margin: 3px 0 0 11px; }
    .blank { border: 0; }
    .r1 td { height: 87px; } .r2 td { height: 42px; } .r3 > td { height: 34px; } .r4 td { height: 38px; } .r5 td { height: 34px; }
    .rs td { height: 32px; } .r20 td { height: 30px; } .r21 td { height: 60px; }
    .r5 td { border-bottom-color: #999; }
    .r5 .ao { border-right: 1px solid #d4d4d4; border-bottom: 1px solid #999; }
    .r5 .ap { border-bottom: 1px solid #999; }
    .frozen { border-bottom-color: #999; }
    .big { font-size: 15px; }
    .banner { display: flex; align-items: center; }
    .logo { display: flex; gap: 7px; padding: 15px 0 0 4px; width: 160px; height: 86px; color: #0b5a40; text-align: left; }
    .logo .mark { margin-top: 2px; }
    .brand { display: flex; flex-direction: column; line-height: 16px; font-size: 15px; }
    .brand .en { font: italic 700 14px/14px "Open Sans", sans-serif; }
    .brand .g { font-size: 6px; line-height: 11px; color: #8d9692; font-weight: 400; }
    .brand .s { font-size: 5px; line-height: 6px; padding-top: 2px; font-weight: 400; }
    .brand .t { font-size: 5px; line-height: 6px; }
    .heading { flex: 1; padding: 0 160px 0 30px; font: 700 13px/20px "Lato", "Noto Sans CJK SC", sans-serif; }
    .heading .cn { padding-right: 22px; font-size: 14px; }
    .wk1 { background: #e2efda; } .wk2 { background: #c6e0b4; } .wk3 { background: #a9d08e; } .wk4 { background: #548235; } .wk5 { background: #375623; }
    .week { border-right: 0; font: 700 9px/14px "Lato", "Noto Sans CJK SC", sans-serif; }
    .day { font: 700 9px/12px "Lato", sans-serif; }
    .sm { font-size: 9px; }
    .weekend { background: #c65911; }
    .holiday { background: #f00; }
    .name { font: 400 11px/15px "Noto Sans", "Noto Sans CJK SC", sans-serif; }
    .plain { font-weight: 400; }
    .remark { color: #c00000; }
    .gap td { color: #0070c0; }
    .flag::before { content: ""; position: absolute; left: 0; top: 0; border-right: 6px solid transparent; border-top: 6px solid #008000; }
    .note::after { content: ""; position: absolute; right: 0; top: 0; border-left: 6px solid transparent; border-top: 6px solid #f00; }
    .s { font-size: 9px; }
    .sO { background: #ff0; } .sG { background: #bfbfbf; } .sPH { background: #9f9; } .sCL { background: #548235; } .sAL { background: #f3c; }
    .sA { background: #f00; color: #fff; } .sB { background: #93f; color: #fff; } .sC { background: #900; color: #fff; }
    .leave { background: #00b050; }
    .r21 td { background: #a9d08e; text-align: left; vertical-align: top; font: 700 10px/14px "Lato", "Noto Sans CJK SC", sans-serif; padding: 2px 0 0 2px; }
    .r21 td.blank { background: #fff; }
    .shift-title { color: #f00; font-size: 11px; }
    .codes { display: flex; }
    .codes span { display: flex; justify-content: space-between; width: 154px; padding-right: 14px; }
    td.cur, td.next { overflow: visible; }
    .ants { position: absolute; z-index: 2; inset: -2px; border: 3px solid #217346; }
    .ants::after { content: ""; position: absolute; inset: -2px; border: 1px dashed #fff; }
    .pick { position: absolute; z-index: 3; left: 0; bottom: 1px; width: 17px; height: 17px; background: #f6f6f6; border: 1px solid #ababab; }
    .freeze { position: absolute; z-index: 1; left: 558px; top: 0; bottom: 0; width: 1px; background: #999; }
    .vscroll { display: flex; flex-direction: column; width: 21px; padding: 3px 3px 0 3px; }
    .vscroll button { height: 15px; background: #fff; border: 1px solid #b4b4b4; }
    .vscroll .track { flex: 1; display: flex; flex-direction: column; background: #dcdcdc; padding: 1px 0; }
    .vscroll .thumb { height: 82%; background: #fff; border: 1px solid #b4b4b4; }
  `];

  private head(n: number) {
    return html`<th class=${classMap({ cur: n === 10, frozen: n === 5 })} scope="row">${n}</th>`;
  }
  private dayClass(i: number) {
    return i === HOLIDAY ? "holiday" : i % 7 === 0 || i % 7 === 6 ? "weekend" : "";
  }
  private cell(s: Staff, code: string, i: number) {
    const current = s.row === 10 && i === 25;
    const next = s.row === 10 && i === 26;
    return html`<td class="s s${code} ${s.notes?.includes(i) ? "note" : ""} ${current ? "cur" : next ? "next" : ""}">${code}${current ? html`<span class="ants"></span>` : nothing}${next ? html`<button class="pick" aria-label="班次列表">${caret()}</button>` : nothing}</td>`;
  }
  private staffRow(s: Staff) {
    const codes = s.shifts.split(" ");
    const rest = DAY_COLS.length - codes.length;
    return html`<tr class="rs">${this.head(s.row)}
      <td class="name">${s.name}</td><td class="plain flag">${s.id}</td><td class="plain">${s.pos}</td><td class="plain">${s.tel}</td>
      <td class="remark">${s.remark}</td><td>${s.ot}</td><td>${s.al}</td>
      ${codes.map((c, i) => this.cell(s, c, i))}
      ${rest ? html`<td class="leave" colspan=${rest}></td>` : nothing}
      <td class="blank"></td><td class="blank"></td></tr>`;
  }

  render() {
    const blank = html`<td class="blank"></td><td class="blank"></td>`;
    return html`
      <div class="sheet">
        <table>
          <colgroup>
            <col style="width:23px" />${LEFT.map(([, w]) => html`<col style="width:${w}px" />`)}
            ${DAY_COLS.map((_, i) => html`<col style="width:${dayWidth(i)}px" />`)}<col style="width:55px" /><col />
          </colgroup>
          <thead><tr>
            <th class="corner">${icon(9, 8, svg`<path d="M9 0v8H0z" fill="#b4b4b4"/>`)}</th>
            ${LEFT.map(([n]) => html`<th scope="col">${n}</th>`)}
            ${DAY_COLS.map((n) => html`<th scope="col" class=${classMap({ cur: n === "AI" })}>${n}</th>`)}
            <th scope="col">AO</th><th scope="col">AP</th>
          </tr></thead>
          <tbody>
            <tr class="r1">${this.head(1)}<td colspan="38"><div class="banner">
              <div class="logo">
                <span class="mark">${icon(32, 30, svg`<path d="M12 1h4.500C15 11 13.500 20 9 28.500H5C9.500 20 11 10 12 1zM21.500 0H26C24.500 11 23 20.500 18 29.500h-4C19 20 20.500 10 21.500 0z" fill="#0b5a40"/><path d="M0 17.500c5 .5 7-2 9.500-5 3.500-4 7-3.500 11-3.500 4 0 7-.5 11.500-2.500-1 3.500-3.500 6-8 6-4 0-8-1.500-11.500 1.500C9 17 5 22 0 20.500z" fill="#0b5a40"/>`)}</span>
                <span class="brand"><span>假日酒店</span><span class="en">Holiday Inn</span><span class="g">洲际酒店集团旗下</span><span class="s">贵阳机场</span><span class="t">GUIYANG AIRPORT</span></span>
              </div>
              <div class="heading"><div>ROOMS-FO Monthly Duty Roster- March 2025</div><div class="cn">房务部-前厅月度排班表(2025-11月)</div></div>
            </div></td>${blank}</tr>
            <tr class="r2">${this.head(2)}<td class="big" colspan="5">Period</td><td class="big" colspan="2">Up.</td>
              ${WEEKS.map(([t, n, c]) => html`<td class="week ${c}" colspan=${n}>${t}</td>`)}${blank}</tr>
            <tr class="r3">${this.head(3)}
              <td rowspan="2">Name of Staff<br />员工姓名</td><td rowspan="2">Employee ID<br />员工号</td><td rowspan="2">Position<br />职位</td>
              <td rowspan="2">Contact No.<br />联系方式</td><td rowspan="2">Remark<br />备注</td>
              <td rowspan="3" class="frozen">OT<br />小时</td><td rowspan="3" class="frozen">AL<br />天数</td>
              ${DAYS.map((d, i) => html`<td class="day ${this.dayClass(i)}">${d}</td>`)}${blank}</tr>
            <tr class="r4">${this.head(4)}${DATES.map((d, i) => html`<td class="sm ${i === HOLIDAY ? "holiday" : ""}">${d}</td>`)}${blank}</tr>
            <tr class="r5">${this.head(5)}<td colspan="4">KWEAP-HI Rooms Forecast</td><td></td>
              ${FORECAST.map((f, i) => html`<td class="sm ${FORECAST_FLAGS.includes(i) ? "flag" : ""}">${f}</td>`)}
              <td class="blank ao"></td><td class="blank ap"></td></tr>
            ${GROUPS.map((g) => html`
              ${g.title ? html`<tr class="rs gap">${this.head(g.row!)}<td colspan="38">${g.title}</td>${blank}</tr>` : nothing}
              ${g.staff.map((s) => this.staffRow(s))}`)}
            <tr class="r20">${this.head(20)}<td colspan="38"></td>${blank}</tr>
            <tr class="r21"><th scope="row"></th><td colspan="38"><div class="shift-title">Shift Remark （ KWEAP):</div>
              <div class="codes">${REMARKS.map(([a, b]) => html`<span><b>${a}</b><b>${b}</b><b>)</b></span>`)}</div></td>${blank}</tr>
          </tbody>
        </table>
        <div class="freeze"></div>
      </div>
      <div class="vscroll">
        <button aria-label="向上滚动">${icon(9, 5, svg`<path d="M0 5h9L4.500 0z" fill="#666"/>`)}</button>
        <div class="track"><div class="thumb"></div></div>
        <button aria-label="向下滚动">${icon(9, 5, svg`<path d="M0 0h9L4.500 5z" fill="#666"/>`)}</button>
      </div>`;
  }
}

@customElement("sheet-footer")
class SheetFooter extends LitElement {
  static styles = [base, css`
    .tabs { display: flex; height: 27px; background: #e6e6e6; }
    .nav { display: flex; width: 100px; padding: 0 36px 0 23px; justify-content: space-between; }
    .nav button { width: 12px; }
    .tab { height: 25px; width: 46px; font-size: 14px; color: #444; }
    .tab.on { background: #fff; color: #217346; border: solid #ababab; border-width: 0 1px; border-bottom: 2px solid #217346; }
    .line { width: 1px; height: 20px; margin-top: 4px; background: #ababab; }
    .tab.two { width: 43px; }
    .add { margin-left: 33px; }
    .dots { margin-left: auto; padding: 7px 15px 0 0; }
    .hscroll { display: flex; width: 38%; height: 15px; margin: 6px 21px 0 0; background: #dcdcdc; }
    .hscroll button { width: 15px; background: #fff; border: 1px solid #ababab; }
    .hscroll .thumb { flex: 0 1 90%; background: #fff; border: 1px solid #ababab; margin-right: auto; }
    .status { display: flex; align-items: center; height: 22px; padding: 0 8px 0 7px; background: #f3f3f3; border-top: 1px solid #c6c6c6; }
    .status p { margin: 0 auto 3px 0; }
    .view { width: 38px; height: 21px; }
    .view.on { background: #c6c6c6; }
    .sym { width: 15px; height: 20px; }
    input { appearance: none; width: 100px; height: 12px; outline: 0;
      background: linear-gradient(#999, #999) center / 100% 1px no-repeat, linear-gradient(#999, #999) center / 1px 6px no-repeat; }
    input::-webkit-slider-thumb { appearance: none; width: 5px; height: 11px; background: #666; }
    output { width: 32px; text-align: right; color: #444; }
  `];
  render() {
    return html`
      <div class="tabs">
        <div class="nav">
          <button aria-label="上一张">${icon(5, 8, svg`<path d="M5 0v8L0 4z" fill="#c0c0c0"/>`)}</button>
          <button aria-label="下一张">${icon(5, 8, svg`<path d="M0 0v8l5-4z" fill="#c0c0c0"/>`)}</button>
        </div>
        <button class="tab on">1月</button><button class="tab two">2月</button><i class="line"></i>
        <button class="add" aria-label="新工作表">${icon(17, 17, svg`<circle cx="8.500" cy="8.500" r="7.500" stroke="#777"/><path d="M8.500 4.500v8M4.500 8.500h8" stroke="#666" stroke-width="1.800"/>`)}</button>
        <div class="dots">${icon(2, 12, svg`<path d="M0 0h2v2H0zM0 5h2v2H0zM0 10h2v2H0z" fill="#aaa"/>`)}</div>
        <div class="hscroll">
          <button aria-label="向左滚动">${icon(5, 8, svg`<path d="M5 0v8L0 4z" fill="#555"/>`)}</button>
          <div class="thumb"></div>
          <button aria-label="向右滚动">${icon(5, 8, svg`<path d="M0 0v8l5-4z" fill="#555"/>`)}</button>
        </div>
      </div>
      <div class="status">
        <p>选定目标区域，然后按 ENTER 或选择“粘贴”</p>
        <button class="view on" aria-label="普通">${icon(13, 13, svg`<path d="M.5 .5h12v12H.5zM.5 4.500h12M.5 8.500h12M4.500 .5v12M8.500 .5v12" stroke="#666"/>`)}</button>
        <button class="view" aria-label="页面布局">${icon(14, 13, svg`<path d="M.5 .5h13v12H.5zM3.500 2.500h7v8h-7zM5 4.500h4M5 6.500h4M5 8.500h4" stroke="#666"/>`)}</button>
        <button class="view" aria-label="分页预览">${icon(14, 13, svg`<path d="M.5 .5h13v12H.5zM4.500 .5v7h5v-7M9.500 7.500h4" stroke="#666"/>`)}</button>
        <button class="sym" aria-label="缩小">${icon(7, 7, svg`<path d="M0 3.500h7" stroke="#555" stroke-width="2"/>`)}</button>
        <input type="range" aria-label="显示比例" min="0" max="100" value="39" />
        <button class="sym" aria-label="放大">${icon(7, 7, svg`<path d="M0 3.500h7M3.500 0v7" stroke="#555" stroke-width="1.600"/>`)}</button>
        <output>80%</output>
      </div>`;
  }
}

const apps = [
  ["任务视图", false, icon(24, 24, svg`<defs><linearGradient id="tv" x1="0" y1="0" x2="1" y2="1"><stop stop-color="#fff"/><stop offset="1" stop-color="#d5d5d5"/></linearGradient></defs><path d="M0 7h17v16H0z" fill="#222"/><path d="M6 1h18v17H6z" fill="url(#tv)"/><path d="M6 7h11v11H6z" fill="#b3b3b3"/>`)],
  ["文件资源管理器", true, icon(25, 24, svg`<path d="M0 2c0-1 1-1.500 2-1.500h6L11 3h14v6H0z" fill="#e0a21a"/><path d="M0 5h10l2-2h12c1 0 1 1 1 1.500V21c0 1-1 1.500-1.500 1.500h-22C.5 22.500 0 22 0 21z" fill="#ffd050"/><path d="M4 22.500v-5c0-1 1-2 2-2h12c1.500 0 2 1 2 2v5z" fill="#1476cf"/><path d="M8 18.500h8" stroke="#0b4f94" stroke-width="1.500"/>`)],
  ["Edge", true, icon(24, 24, svg`<circle cx="12" cy="12" r="12" fill="#1b7ed0"/><path d="M1 8C4-2 20-3 23.500 9c1 4-1.500 7-5 7-3 0-4-1-3-3 1-3-1-5.500-4-5.500C7 7.500 3 8 1 12z" fill="#48c6a0"/><path d="M1 8C4-2 17-2 21 5 14 2 6 3 1 12z" fill="#2fb2d6"/><path d="M9 9c-4 4-2 11 4 13 3 1 7-1 9-4-3 2-8 1-10-2-2-2-2-5-1-7z" fill="#0c4d9b"/>`)],
  ["Microsoft Store", false, icon(24, 24, svg`<path d="M6 6V2.500C6 1.500 7 1 8 1h8c1 0 2 .5 2 1.500V6" stroke="#2bb4ee" stroke-width="2"/><path d="M0 6h24v14c0 2-1 3.500-3 3.500H3c-2 0-3-1.500-3-3.500z" fill="#124f8c"/><path d="M7 10h4.500v4.500H7z" fill="#f25022"/><path d="M12.500 10H17v4.500h-4.500z" fill="#7fba00"/><path d="M7 15.500h4.500V20H7z" fill="#00a4ef"/><path d="M12.500 15.500H17V20h-4.500z" fill="#ffb900"/>`)],
  ["计算器", true, icon(18, 24, svg`<path d="M0 0h18v24H0z" fill="#5d6873"/><path d="M2 2h14v5H2z" fill="#5bd3f4"/><path d="M2 9h4v4H2zM7 9h4v4H7zM12 9h4v4h-4zM2 14h4v4H2zM7 14h4v4H7zM2 19h4v4H2zM7 19h4v4H7z" fill="#d5dade"/><path d="M12 14h4v9h-4z" fill="#0f4f93"/>`)],
  ["微信", true, icon(25, 22, svg`<ellipse cx="9" cy="8" rx="9" ry="7.700" fill="#1fce6d"/><path d="M3 12l-1 5 5-2z" fill="#1fce6d"/><circle cx="6" cy="6" r="1.100" fill="#116b38"/><circle cx="12" cy="6" r="1.100" fill="#116b38"/><ellipse cx="17.500" cy="14" rx="7" ry="6.300" fill="#e9ecea"/><path d="M20 19l4 2-1-4z" fill="#e9ecea"/><circle cx="15" cy="12.500" r=".9" fill="#777"/><circle cx="20" cy="12.500" r=".9" fill="#777"/>`)],
  ["Chrome", true, icon(24, 24, svg`<circle cx="12" cy="12" r="12" fill="#fbc116"/><path d="M12 12L1.600 6A12 12 0 0 0 11 24l4.500-8z" fill="#2da44f"/><path d="M12 12L1.600 6A12 12 0 0 1 22.400 6.500H12z" fill="#e33b2e"/><circle cx="12" cy="12" r="6" fill="#fff"/><circle cx="12" cy="12" r="4.600" fill="#2f78e8"/>`)],
  ["收银", true, icon(24, 24, svg`<rect width="24" height="24" rx="2" fill="#2c5cff"/><path d="M7 4l5 6 5-6M6 10.500h12M6 15h12M12 10v10" stroke="#fff" stroke-width="2"/>`)],
  ["Excel", true, icon(24, 24, svg`<path d="M12 3.500h10.500v17H12z" fill="#fff" stroke="#1e7145"/><path d="M14 6.500h3M18.500 6.500h3M14 9.500h3M18.500 9.500h3M14 12.500h3M18.500 12.500h3M14 15.500h3M18.500 15.500h3M14 18h3M18.500 18h3" stroke="#1e7145" stroke-width="1.500"/><path d="M0 2.500L14 0v24L0 21.500z" fill="#1e7145"/><path d="M4 7.500l6 9M10 7.500l-6 9" stroke="#fff" stroke-width="2"/>`)],
] as const;

@customElement("task-bar")
class TaskBar extends LitElement {
  static styles = [base, css`
    .bar { display: grid; grid-template-columns: 1fr auto 1fr; height: 48px; background: linear-gradient(90deg, #c7ebdd, #caeedf 50%, #c9ecdd); border-top: 1px solid #a3bfb4; color: #1d1d1d; }
    .weather { justify-content: flex-start; gap: 6px; padding-left: 19px; padding-bottom: 8px; line-height: 15px; text-align: left; }
    .weather .sub { color: #4d5e57; }
    .mid { display: flex; align-items: center; padding-left: 2px; }
    .app { position: relative; width: 44px; height: 47px; padding-bottom: 1px; }
    .app.run::after { content: ""; position: absolute; bottom: 4px; left: 19px; width: 6px; height: 3px; border-radius: 2px; background: #7d8f88; }
    .app.cur::before { content: ""; position: absolute; inset: 4px 3px; border-radius: 4px; background: #e5f5ee; }
    .app.cur svg { position: relative; }
    .app.cur::after { left: 14px; width: 16px; background: #0a78d4; }
    .search { display: flex; align-items: center; width: 218px; height: 32px; margin: 0 3px; padding: 0 3px 0 10px; gap: 10px; border-radius: 16px; background: #eff9f5; border: 1px solid #b7d6ca; }
    .search input { flex: 1; min-width: 0; font-size: 14px; outline: 0; }
    .search input::placeholder { color: #555; opacity: 1; }
    .tray { display: flex; justify-content: flex-end; }
    .t1 { width: 32px; } .t2 { width: 31px; } .t3 { width: 34px; font-size: 15px; } .t4 { width: 43px; font-size: 15px; } .t5 { width: 29px; } .t6 { width: 23px; }
    .tray button { padding-bottom: 1px; }
    .tray .time { width: 93px; padding: 0 19px 0 0; flex-direction: column; align-items: flex-end; line-height: 16px; }
  `];
  render() {
    return html`<footer class="bar">
      <button class="weather">
        ${icon(25, 18, svg`<defs><linearGradient id="cl" x1="0" y1="0" x2="0" y2="1"><stop stop-color="#b9cdf8"/><stop offset="1" stop-color="#7da5ee"/></linearGradient></defs><path d="M5 17a5 5 0 0 1 0-9.500C6-1 16-1 18 6c9 0 8 11 1 11z" fill="url(#cl)"/>`)}
        <span>12°C<br /><span class="sub">阴</span></span>
      </button>
      <div class="mid">
        <button class="app" aria-label="开始">${icon(23, 23, svg`<defs><linearGradient id="st" x1="0" y1="0" x2="1" y2="1"><stop stop-color="#4cc8f5"/><stop offset="1" stop-color="#0669c4"/></linearGradient></defs><path d="M0 0h11v11H0zM12 0h11v11H12zM0 12h11v11H0zM12 12h11v11H12z" fill="url(#st)"/>`)}</button>
        <div class="search">
          ${icon(16, 16, svg`<circle cx="7" cy="7" r="6" stroke="#222" stroke-width="1.600"/><path d="M11.500 11.500L15 15" stroke="#222" stroke-width="1.800"/>`)}
          <input aria-label="搜索" placeholder="搜索" />
          ${icon(48, 24, svg`<ellipse cx="11" cy="10" rx="11" ry="7" transform="rotate(-35 11 10)" fill="#eeb765"/><circle cx="13" cy="7" r="5.500" fill="#f6cf8d"/><path d="M2 10c5-1 7 6 8 12M3 6c7 2 11 7 16 13M12 22l8-5M13 16l8 6" stroke="#dc5273" stroke-width="2"/><ellipse cx="36" cy="18.500" rx="11" ry="4" fill="#6a5a96"/><path d="M28 3c4-3 12-3 16 0l-2 15H30z" fill="#584a80"/><path d="M29.500 13c4 2 9 2 13 0l-.5 4c-4 2-8 2-12 0z" fill="#9d86cf"/><ellipse cx="36" cy="3" rx="8" ry="2" fill="#786aa3"/>`)}
        </div>
        ${apps.map(([name, run, pic]) => html`<button class=${classMap({ app: true, run, cur: name === "Excel" })} aria-label=${name}>${pic}</button>`)}
      </div>
      <div class="tray">
        <button class="t1" aria-label="显示隐藏的图标">${icon(11, 7, svg`<path d="M.5 6l5-5 5 5" stroke="#222" stroke-width="1.400"/>`)}</button>
        <button class="t2" aria-label="更新">${icon(18, 18, svg`<path d="M2 7c2-7 11-7 13-2M15.500 1v4.500H11M3 16.500V12h4M3.500 12.500c1 2 3 3.500 5 3.500" stroke="#222" stroke-width="1.300"/><circle cx="12.500" cy="12.500" r="4.500" fill="#0a78d4"/>`)}</button>
        <button class="t3" aria-label="输入法语言">中</button><button class="t4" aria-label="拼音输入法">拼</button>
        <button class="t5" aria-label="网络">${icon(17, 17, svg`<path d="M11 2H2v9.500h11V10M5 15.500h6M8 11.500v4M11.500 .8h4v4.500h-4zM13.500 5.500v4.500" stroke="#222" stroke-width="1.300"/>`)}</button>
        <button class="t6" aria-label="音量">${icon(17, 15, svg`<path d="M1 5.500h2.500L7 2v11L3.500 9.500H1z" stroke="#222" stroke-width="1.200"/><path d="M9 5.500c1 1 1 3 0 4M11 3.500c2 2 2 6 0 8M13.500 1.500c3 3 3 9 0 12" stroke="#222" stroke-width="1.100"/>`)}</button>
        <button class="time"><span>15:03</span><span>2025/12/16</span></button>
      </div>
    </footer>`;
  }
}

@customElement("app-root")
class AppRoot extends LitElement {
  static styles = css`
    :host { display: flex; flex-direction: column; height: 100vh; overflow: hidden; }
    excel-ribbon, sheet-footer, task-bar { flex: none; }
    duty-grid { flex: 1; }
  `;
  render() {
    return html`<excel-ribbon></excel-ribbon><duty-grid></duty-grid><sheet-footer></sheet-footer><task-bar></task-bar>`;
  }
}
